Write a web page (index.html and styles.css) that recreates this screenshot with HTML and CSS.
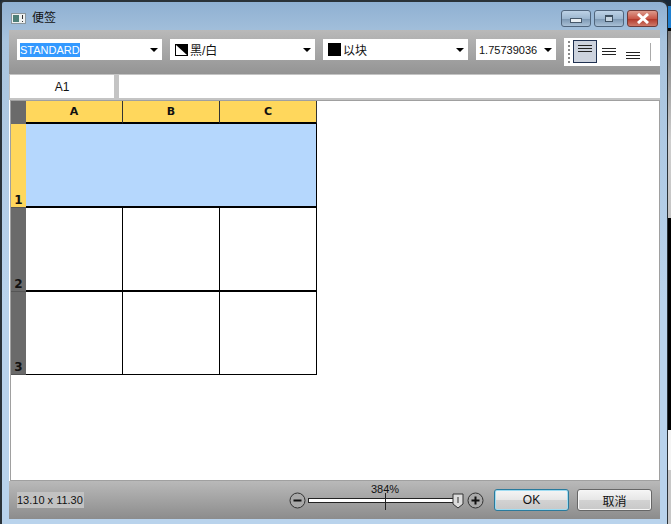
FILE: index.html
```html
<!DOCTYPE html>
<html lang="zh-CN">
<head>
    <meta charset="UTF-8">
    <title>便签</title>
    <link rel="stylesheet" href="styles.css">
</head>
<body>
    <div class="window">
        <div class="titlebar">
            <div class="title-left">
                <svg class="app-icon" width="15" height="11" viewBox="0 0 15 11">
                    <rect x="0.5" y="0.5" width="14" height="10" fill="#eef1f1" stroke="#8a969c"/>
                    <rect x="2" y="2" width="6" height="7" fill="#4d7f78"/>
                    <rect x="11" y="2" width="1" height="4" fill="#333"/>
                    <rect x="11" y="8" width="1" height="1" fill="#333"/>
                </svg>
                <span class="title-text">便签</span>
            </div>
            <div class="win-buttons">
                <div class="win-btn"><span class="min-glyph"></span></div>
                <div class="win-btn"><span class="max-glyph"></span></div>
                <div class="win-btn win-close">
                    <svg width="14" height="11" viewBox="0 0 14 11"><path d="M2 1 L12 10 M12 1 L2 10" stroke="#fff" stroke-width="3"/></svg>
                </div>
            </div>
        </div>

        <div class="dialog">
            <div class="toolbar">
                <div class="combo combo-wide">
                    <span class="selected">STANDARD</span>
                    <span class="arrow"></span>
                </div>
                <div class="combo combo-wide">
                    <svg class="swatch" width="13" height="12" viewBox="0 0 13 12">
                        <rect width="13" height="12" fill="#000"/>
                        <path d="M1 1 L12 11 L1 11 Z" fill="#fff"/>
                    </svg>
                    <span class="combo-text">黑/白</span>
                    <span class="arrow"></span>
                </div>
                <div class="combo combo-wide">
                    <span class="block-swatch"></span>
                    <span class="combo-text">以块</span>
                    <span class="arrow"></span>
                </div>
                <div class="combo combo-num">
                    <span class="num-text">1.75739036</span>
                    <span class="arrow"></span>
                </div>
                <div class="align-bar">
                    <span class="grip"></span>
                    <div class="align-btn align-active align-top"><i></i><i></i><i></i></div>
                    <div class="align-btn align-middle"><i></i><i></i><i></i></div>
                    <div class="align-btn align-bottom"><i></i><i></i><i></i></div>
                    <span class="align-sep"></span>
                </div>
            </div>

            <div class="formula">
                <div class="name-box">A1</div>
                <div class="formula-input"></div>
            </div>

            <div class="sheet">
                <div class="grid">
                    <div class="corner"></div>
                    <div class="col-head">A</div>
                    <div class="col-head">B</div>
                    <div class="col-head">C</div>

                    <div class="row-head row-on">1</div>
                    <div class="cell-merged"></div>

                    <div class="row-head">2</div>
                    <div class="cell"></div>
                    <div class="cell"></div>
                    <div class="cell"></div>

                    <div class="row-head">3</div>
                    <div class="cell"></div>
                    <div class="cell"></div>
                    <div class="cell"></div>
                </div>
            </div>

            <div class="statusbar">
                <div class="size-label">13.10 x 11.30</div>
                <div class="status-right">
                    <div class="zoom">
                        <span class="zoom-btn">
                            <svg width="17" height="17" viewBox="0 0 17 17"><circle cx="8.5" cy="8.5" r="7.5" fill="#a9a9a9" stroke="#333"/><path d="M4.5 8.5 H12.5" stroke="#111" stroke-width="2"/></svg>
                        </span>
                        <div class="slider">
                            <span class="zoom-value">384%</span>
                            <span class="slider-tick"></span>
                            <svg class="slider-thumb" width="12" height="16" viewBox="0 0 12 16"><path d="M1 1 H11 V11 L6 15 L1 11 Z" fill="#dcdcdc" stroke="#333"/><path d="M6 4 V10" stroke="#333"/></svg>
                        </div>
                        <span class="zoom-btn">
                            <svg width="17" height="17" viewBox="0 0 17 17"><circle cx="8.5" cy="8.5" r="7.5" fill="#a9a9a9" stroke="#333"/><path d="M4.5 8.5 H12.5 M8.5 4.5 V12.5" stroke="#111" stroke-width="2"/></svg>
                        </span>
                    </div>
                    <button class="btn btn-default">OK</button>
                    <button class="btn">取消</button>
                </div>
            </div>
        </div>
    </div>
    <div class="backdrop"></div>
</body>
</html>
```
FILE: styles.css
```css
html, body {
    margin: 0;
    padding: 0;
    height: 100%;
    overflow: hidden;
}

body {
    display: flex;
    font-family: "Liberation Sans", "Noto Sans CJK SC", sans-serif;
    font-size: 11px;
    color: #111;
    background: #1a2a3a;
}

.window {
    box-sizing: border-box;
    width: 668px;
    height: 524px;
    flex: none;
    padding: 0 7px 5px 7px;
    display: flex;
    flex-direction: column;
    background: linear-gradient(to bottom, #8fb0d2 0, #a9c4de 40px, #b9d3ec 300px, #b9d3ec 100%);
    border-top: 2px solid #2a3238;
    border-left: 2px solid #2a3238;
    border-right: 1px solid #2a3238;
    border-radius: 4px 8px 0 0;
}

/* what shows of the windows behind, right of the dialog */
.backdrop {
    flex: 1;
    background: linear-gradient(to bottom,
        #1a2a3a 0, #1a2a3a 6px,
        #1f7fd0 6px, #1f7fd0 28px,
        #000 28px, #000 31px,
        #777 31px, #cfcfcf 140px, #c4c4c4 218px,
        #000 218px, #000 430px,
        #f4f4f4 430px, #f4f4f4 470px,
        #c8c8c8 470px, #c8c8c8 100%);
}

.titlebar {
    height: 28px;
    flex: none;
    display: flex;
    justify-content: space-between;
    align-items: flex-start;
}

.title-left {
    display: flex;
    align-items: center;
    gap: 6px;
    margin: 9px 0 0 2px;
}

.title-text {
    font-size: 12px;
    line-height: 14px;
}

.win-buttons {
    display: flex;
    gap: 3px;
    margin: 8px 2px 0 0;
}

.win-btn {
    width: 28px;
    height: 15px;
    display: flex;
    align-items: center;
    justify-content: center;
    border: 1px solid #50657c;
    border-radius: 3px;
    background: linear-gradient(to bottom, #bdd2e6, #9db7d0 50%, #7e99b4 55%, #a9c0d6);
}

.win-close {
    width: 29px;
    background: linear-gradient(to bottom, #dd9a8c, #c9594a 50%, #b23a2c 55%, #cf7a6a);
    border-color: #6e3a38;
}

.min-glyph {
    width: 10px;
    height: 3px;
    margin-top: 3px;
    background: #e8eef3;
    border: 1px solid #46586a;
}

.max-glyph {
    width: 6px;
    height: 4px;
    background: #c6d5e2;
    border: 2px solid #3d4f60;
    border-width: 2px 1px 1px;
}

.dialog {
    flex: 1;
    min-height: 0;
    display: flex;
    flex-direction: column;
    background: #fff;
}

.toolbar {
    height: 44px;
    flex: none;
    box-sizing: border-box;
    padding: 9px 0 0 8px;
    display: flex;
    align-items: flex-start;
    gap: 8px;
    background: linear-gradient(to bottom, #b9b9b9, #949494);
}

.combo {
    height: 21px;
    box-sizing: border-box;
    padding: 0 4px 0 3px;
    display: flex;
    align-items: center;
    background: #fff;
}

.combo-wide {
    width: 145px;
}

.combo-num {
    width: 80px;
}

.selected {
    background: #3399ff;
    color: #fff;
    line-height: 14px;
}

.combo-text {
    font-size: 12px;
    margin-left: 2px;
}

.swatch {
    margin-left: 2px;
}

.block-swatch {
    width: 13px;
    height: 13px;
    margin-left: 2px;
    background: #000;
}

.arrow {
    margin-left: auto;
    width: 0;
    height: 0;
    border-left: 4px solid transparent;
    border-right: 4px solid transparent;
    border-top: 4px solid #000;
}

.align-bar {
    width: 96px;
    height: 28px;
    margin-top: -1px;
    box-sizing: border-box;
    display: flex;
    align-items: stretch;
    background: #fff;
    padding: 2px 0 3px 4px;
}

.grip {
    width: 2px;
    margin: 1px 3px 0 0;
    background: repeating-linear-gradient(to bottom, #888 0, #888 2px, #fff 2px, #fff 4px);
}

.align-btn {
    width: 24px;
    box-sizing: border-box;
    display: flex;
    flex-direction: column;
    align-items: center;
    gap: 2px;
}

.align-btn i {
    display: block;
    height: 1px;
    width: 14px;
    background: #222;
}

.align-active {
    background: #cdd3de;
    border: 1px solid #1f3050;
}

.align-top {
    padding-top: 4px;
}

.align-middle {
    justify-content: center;
}

.align-bottom {
    justify-content: flex-end;
    padding-bottom: 4px;
}

.align-sep {
    width: 1px;
    margin: 3px 0 2px 5px;
    background: #aaa;
}

.formula {
    height: 26px;
    flex: none;
    box-sizing: border-box;
    padding: 1px 0 2px 1px;
    display: flex;
    gap: 5px;
    background: #c4c4c4;
}

.name-box {
    width: 104px;
    display: flex;
    align-items: center;
    justify-content: center;
    font-size: 12px;
    background: #fff;
}

.formula-input {
    flex: 1;
    background: #fff;
}

.sheet {
    flex: 1;
    min-height: 0;
    margin-left: 1px;
    box-sizing: border-box;
    border: 1px solid #a0a0a0;
    background: #fff;
}

.grid {
    display: grid;
    grid-template-columns: 15px 97px 97px 97px;
    grid-template-rows: 23px 84px 84px 83px;
    width: 306px;
}

.corner {
    background: #6a6a6a;
}

.col-head {
    display: flex;
    align-items: center;
    justify-content: center;
    font-family: "DejaVu Sans", sans-serif;
    font-weight: bold;
    font-size: 11px;
    background: #ffd75c;
    border-right: 1px solid #333;
    border-bottom: 2px solid #000;
}

.row-head {
    display: flex;
    align-items: flex-end;
    justify-content: center;
    font-family: "DejaVu Sans", sans-serif;
    font-weight: bold;
    font-size: 12px;
    line-height: 14px;
    background: #6a6a6a;
    color: #111;
    border-bottom: 1px solid #555;
}

.row-on {
    background: #ffd75c;
}

.cell-merged {
    grid-column: span 3;
    background: #b5d7fd;
    border-right: 1px solid #000;
    border-bottom: 2px solid #000;
}

.cell {
    border-right: 1px solid #000;
    border-bottom: 2px solid #000;
}

.cell:nth-last-child(-n+3) {
    border-bottom-width: 1px;
}

.statusbar {
    height: 38px;
    flex: none;
    box-sizing: border-box;
    display: flex;
    align-items: center;
    justify-content: space-between;
    padding: 0 8px 0 8px;
    background: linear-gradient(to bottom, #b9b9b9, #8c8c8c);
}

.size-label {
    width: 67px;
    height: 16px;
    line-height: 16px;
    white-space: nowrap;
    background: #c2c2c2;
}

.status-right {
    display: flex;
    align-items: center;
}

.zoom {
    display: flex;
    align-items: center;
    margin-right: 10px;
}

.zoom-btn {
    display: flex;
}

.slider {
    position: relative;
    width: 144px;
    height: 3px;
    margin: 0 13px 0 2px;
    background: #fff;
    border: 1px solid #222;
}

.zoom-value {
    position: absolute;
    left: 62px;
    top: -16px;
}

.slider-tick {
    position: absolute;
    left: 76px;
    top: -6px;
    width: 1px;
    height: 17px;
    background: #222;
}

.slider-thumb {
    position: absolute;
    right: -11px;
    top: -6px;
}

.btn {
    width: 75px;
    height: 22px;
    margin-left: 8px;
    padding: 0;
    font-family: inherit;
    font-size: 12px;
    color: #111;
    border: 1px solid #666;
    border-radius: 3px;
    background: linear-gradient(to bottom, #f5f5f5, #e6e6e6 50%, #d2d2d2 52%, #c8c8c8);
    box-shadow: inset 0 0 0 1px #f6f6f6;
}

.btn-default {
    margin-left: 0;
    border-color: #2a7a9c;
    box-shadow: inset 0 0 0 1px #9fdcf2;
}
```
